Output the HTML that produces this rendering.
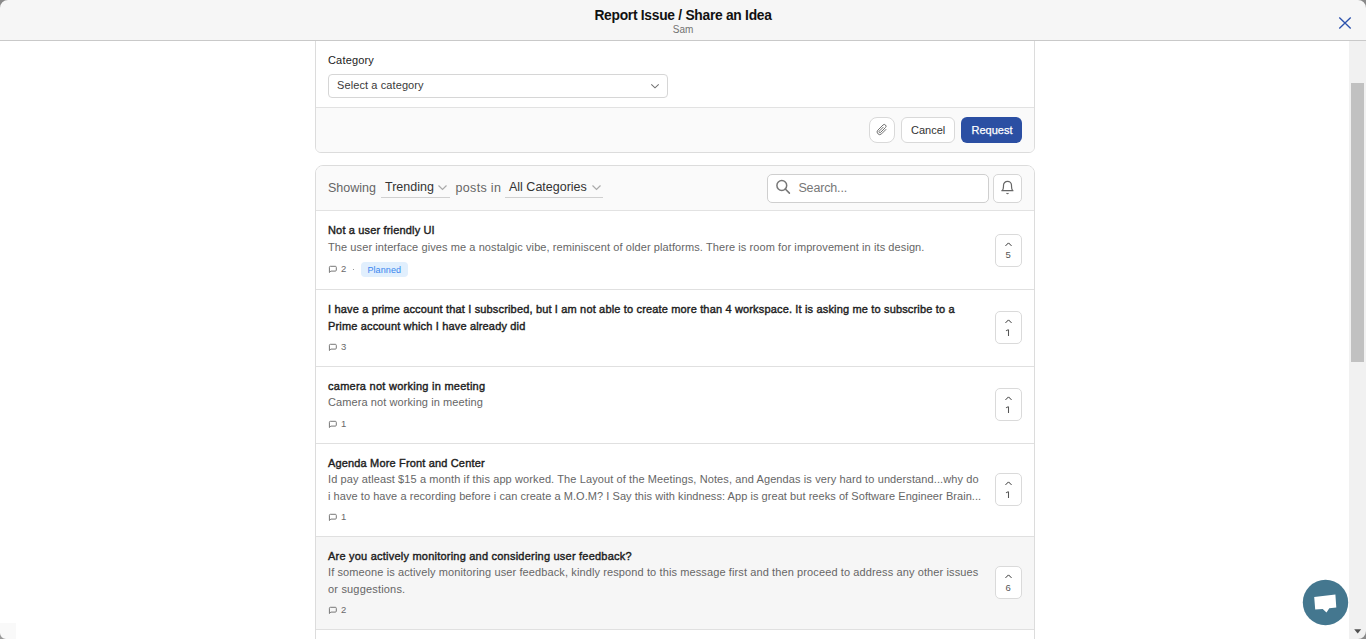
<!DOCTYPE html>
<html><head><meta charset="utf-8">
<style>
*{box-sizing:border-box;margin:0;padding:0}
html,body{width:1366px;height:639px;overflow:hidden;background:#fff;font-family:"Liberation Sans", sans-serif;color:#222}
#hdr{position:absolute;left:0;top:0;width:1366px;height:41px;background:#f6f6f6;border-bottom:1px solid #c9c9c9;z-index:5}
#sb{position:absolute;left:1349px;top:41px;width:17px;height:598px;background:#f1f1f1;z-index:4}
#thumb{position:absolute;left:1351px;top:83px;width:13px;height:279px;background:#c1c1c1;z-index:4}
</style></head><body>
<div style="position:absolute;left:315px;top:-20px;width:720px;height:173px;border:1px solid #dcdcdc;border-radius:6px;background:#fff;overflow:hidden"><div style="position:absolute;left:0;top:126px;width:718px;height:46px;background:#fafafa;border-top:1px solid #e2e2e2"></div></div>
<div style="position:absolute;left:328px;top:55px;font-size:11px;line-height:11px;color:#222;font-weight:400;letter-spacing:0.17px;white-space:nowrap;">Category</div>
<div style="position:absolute;left:328px;top:74px;width:340px;height:24px;border:1px solid #d6d6d6;border-radius:4px;background:#fff"></div>
<div style="position:absolute;left:337px;top:80px;font-size:11px;line-height:11px;color:#3a3a3a;font-weight:400;letter-spacing:0.1px;white-space:nowrap;">Select a category</div>
<svg style="position:absolute;left:650px;top:83px" width="10" height="6" viewBox="0 0 10 6"><path d="M1.3 1.3L5 4.8L8.7 1.3" fill="none" stroke="#707070" stroke-width="1.05"/></svg>
<div style="position:absolute;left:869px;top:117px;width:26px;height:26px;border:1px solid #d9d9d9;border-radius:8px;background:#fff"></div>
<svg style="position:absolute;left:874px;top:122px" width="16" height="16" viewBox="0 0 16 16"><path d="M12.2 7.2L7.6 11.8a2.6 2.6 0 0 1-3.7-3.7l5.1-5.1a1.7 1.7 0 0 1 2.5 2.5L6.6 10.4a0.9 0.9 0 0 1-1.3-1.3L9.4 5" fill="none" stroke="#6a6a6a" stroke-width="0.95"/></svg>
<div style="position:absolute;left:901px;top:117px;width:54px;height:26px;border:1px solid #d9d9d9;border-radius:6px;background:#fff"></div>
<div style="position:absolute;left:911px;top:125px;font-size:11px;line-height:11px;color:#333;font-weight:400;letter-spacing:0px;white-space:nowrap;">Cancel</div>
<div style="position:absolute;left:961px;top:117px;width:61px;height:26px;border-radius:6px;background:#2b4fa3"></div>
<div style="position:absolute;left:971.5px;top:125px;font-size:11px;line-height:11px;color:#fff;font-weight:400;letter-spacing:0px;white-space:nowrap;-webkit-text-stroke:0.25px #fff">Request</div>
<div style="position:absolute;left:315px;top:165px;width:720px;height:520px;border:1px solid #dcdcdc;border-radius:8px;background:#fff;overflow:hidden"><div style="position:absolute;left:0;top:0;width:718px;height:45px;background:#fafafa;border-bottom:1px solid #e2e2e2"></div></div>
<div style="position:absolute;left:328px;top:182px;font-size:12.5px;line-height:12.5px;color:#666;font-weight:400;letter-spacing:0px;white-space:nowrap;">Showing</div>
<div style="position:absolute;left:385px;top:181px;font-size:12.5px;line-height:12.5px;color:#333;font-weight:400;letter-spacing:0px;white-space:nowrap;">Trending</div>
<svg style="position:absolute;left:437px;top:184px" width="11" height="7" viewBox="0 0 11 7"><path d="M1.5 1.5L5.5 5.5L9.5 1.5" fill="none" stroke="#aaa" stroke-width="1.2"/></svg>
<div style="position:absolute;left:381px;top:197px;width:69px;height:1px;background:#d0d0d0"></div>
<div style="position:absolute;left:455.5px;top:182px;font-size:12.5px;line-height:12.5px;color:#666;font-weight:400;letter-spacing:0.33px;white-space:nowrap;">posts in</div>
<div style="position:absolute;left:509px;top:181px;font-size:12.5px;line-height:12.5px;color:#333;font-weight:400;letter-spacing:0px;white-space:nowrap;">All Categories</div>
<svg style="position:absolute;left:591px;top:184px" width="11" height="7" viewBox="0 0 11 7"><path d="M1.5 1.5L5.5 5.5L9.5 1.5" fill="none" stroke="#aaa" stroke-width="1.2"/></svg>
<div style="position:absolute;left:505px;top:197px;width:98px;height:1px;background:#d0d0d0"></div>
<div style="position:absolute;left:767px;top:174px;width:222px;height:29px;border:1px solid #cfcfcf;border-radius:5px;background:#fff"></div>
<svg style="position:absolute;left:774px;top:179px" width="18" height="18" viewBox="0 0 18 18"><circle cx="7.8" cy="6.5" r="4.9" fill="none" stroke="#777" stroke-width="1.5"/><path d="M11.3 10L15.4 14.1" stroke="#777" stroke-width="1.6" stroke-linecap="round"/></svg>
<div style="position:absolute;left:798.4px;top:182px;font-size:12.5px;line-height:12.5px;color:#777;font-weight:400;letter-spacing:-0.15px;white-space:nowrap;">Search...</div>
<div style="position:absolute;left:993px;top:174px;width:29px;height:29px;border:1px solid #d6d6d6;border-radius:5px;background:#fff"></div>
<svg style="position:absolute;left:999px;top:179px" width="17" height="17" viewBox="0 0 17 17"><path d="M2.4 11.7H14.4M3.3 11.7C4.2 10.4 4.5 9.2 4.5 7.3V6.3A4 4 0 0 1 12.5 6.3V7.3C12.5 9.2 12.8 10.4 13.7 11.7" fill="none" stroke="#666" stroke-width="1.2"/><path d="M7.5 14.2Q8.5 15.4 9.5 14.2" fill="none" stroke="#666" stroke-width="1.1"/></svg>
<div style="position:absolute;left:316px;top:289px;width:718px;height:1px;background:#e0e0e0"></div>
<div style="position:absolute;left:328px;top:225px;font-size:11px;line-height:11px;color:#1d1d1d;font-weight:400;letter-spacing:0.16px;white-space:nowrap;-webkit-text-stroke:0.4px #1d1d1d">Not a user friendly UI</div>
<div style="position:absolute;left:328px;top:242px;font-size:11px;line-height:11px;color:#666;font-weight:400;letter-spacing:0.09px;white-space:nowrap;">The user interface gives me a nostalgic vibe, reminiscent of older platforms. There is room for improvement in its design.</div>
<svg style="position:absolute;left:328px;top:265px" width="10" height="9" viewBox="0 0 10 9"><path d="M1.4 7.5V2.3a1 1 0 0 1 1-1h4.9a1 1 0 0 1 1 1v2.8a1 1 0 0 1-1 1H2.9z" fill="none" stroke="#777" stroke-width="1"/></svg>
<div style="position:absolute;left:341px;top:264px;font-size:9.5px;line-height:9.5px;color:#6a6a6a;font-weight:400;letter-spacing:0px;white-space:nowrap;">2</div>
<div style="position:absolute;left:353px;top:269px;width:1px;height:1px;background:#999"></div>
<div style="position:absolute;left:361px;top:262px;width:47px;height:15px;border-radius:4px;background:#e1effd"></div>
<div style="position:absolute;left:367.4px;top:266px;font-size:9px;line-height:9px;color:#3886ef;font-weight:400;letter-spacing:0.1px;white-space:nowrap;">Planned</div>
<div style="position:absolute;left:995px;top:234px;width:27px;height:33px;border:1px solid #dadada;border-radius:5px;background:#fff"></div><svg style="position:absolute;left:1004px;top:242px" width="9" height="6" viewBox="0 0 9 6"><path d="M1.5 3.9L4.5 0.9L7.5 3.9" fill="none" stroke="#333" stroke-width="1"/></svg><div style="position:absolute;left:1005.5px;top:250px;font-size:9.5px;line-height:9.5px;color:#555;font-weight:400;letter-spacing:0px;white-space:nowrap;">5</div>
<div style="position:absolute;left:316px;top:366px;width:718px;height:1px;background:#e0e0e0"></div>
<div style="position:absolute;left:328px;top:304px;font-size:11px;line-height:11px;color:#1d1d1d;font-weight:400;letter-spacing:0.16px;white-space:nowrap;-webkit-text-stroke:0.4px #1d1d1d">I have a prime account that I subscribed, but I am not able to create more than 4 workspace. It is asking me to subscribe to a</div>
<div style="position:absolute;left:328px;top:321px;font-size:11px;line-height:11px;color:#1d1d1d;font-weight:400;letter-spacing:0.16px;white-space:nowrap;-webkit-text-stroke:0.4px #1d1d1d">Prime account which I have already did</div>
<svg style="position:absolute;left:328px;top:343px" width="10" height="9" viewBox="0 0 10 9"><path d="M1.4 7.5V2.3a1 1 0 0 1 1-1h4.9a1 1 0 0 1 1 1v2.8a1 1 0 0 1-1 1H2.9z" fill="none" stroke="#777" stroke-width="1"/></svg>
<div style="position:absolute;left:341px;top:342px;font-size:9.5px;line-height:9.5px;color:#6a6a6a;font-weight:400;letter-spacing:0px;white-space:nowrap;">3</div>
<div style="position:absolute;left:995px;top:311px;width:27px;height:33px;border:1px solid #dadada;border-radius:5px;background:#fff"></div><svg style="position:absolute;left:1004px;top:319px" width="9" height="6" viewBox="0 0 9 6"><path d="M1.5 3.9L4.5 0.9L7.5 3.9" fill="none" stroke="#333" stroke-width="1"/></svg><svg style="position:absolute;left:1004px;top:327px" width="8" height="10" viewBox="0 0 8 10"><path d="M2 3.9L4.3 2.6M4.5 2.4V9" fill="none" stroke="#555" stroke-width="1.05"/></svg>
<div style="position:absolute;left:316px;top:443px;width:718px;height:1px;background:#e0e0e0"></div>
<div style="position:absolute;left:328px;top:381px;font-size:11px;line-height:11px;color:#1d1d1d;font-weight:400;letter-spacing:0.26px;white-space:nowrap;-webkit-text-stroke:0.4px #1d1d1d">camera not working in meeting</div>
<div style="position:absolute;left:328px;top:397px;font-size:11px;line-height:11px;color:#666;font-weight:400;letter-spacing:0.09px;white-space:nowrap;">Camera not working in meeting</div>
<svg style="position:absolute;left:328px;top:420px" width="10" height="9" viewBox="0 0 10 9"><path d="M1.4 7.5V2.3a1 1 0 0 1 1-1h4.9a1 1 0 0 1 1 1v2.8a1 1 0 0 1-1 1H2.9z" fill="none" stroke="#777" stroke-width="1"/></svg>
<div style="position:absolute;left:341px;top:419px;font-size:9.5px;line-height:9.5px;color:#6a6a6a;font-weight:400;letter-spacing:0px;white-space:nowrap;">1</div>
<div style="position:absolute;left:995px;top:388px;width:27px;height:33px;border:1px solid #dadada;border-radius:5px;background:#fff"></div><svg style="position:absolute;left:1004px;top:396px" width="9" height="6" viewBox="0 0 9 6"><path d="M1.5 3.9L4.5 0.9L7.5 3.9" fill="none" stroke="#333" stroke-width="1"/></svg><svg style="position:absolute;left:1004px;top:404px" width="8" height="10" viewBox="0 0 8 10"><path d="M2 3.9L4.3 2.6M4.5 2.4V9" fill="none" stroke="#555" stroke-width="1.05"/></svg>
<div style="position:absolute;left:316px;top:536px;width:718px;height:1px;background:#e0e0e0"></div>
<div style="position:absolute;left:328px;top:458px;font-size:11px;line-height:11px;color:#1d1d1d;font-weight:400;letter-spacing:0.16px;white-space:nowrap;-webkit-text-stroke:0.4px #1d1d1d">Agenda More Front and Center</div>
<div style="position:absolute;left:328px;top:474px;font-size:11px;line-height:11px;color:#666;font-weight:400;letter-spacing:0.107px;white-space:nowrap;">Id pay atleast $15 a month if this app worked. The Layout of the Meetings, Notes, and Agendas is very hard to understand...why do</div>
<div style="position:absolute;left:328px;top:491px;font-size:11px;line-height:11px;color:#666;font-weight:400;letter-spacing:0.055999999999999994px;white-space:nowrap;">i have to have a recording before i can create a M.O.M? I Say this with kindness: App is great but reeks of Software Engineer Brain...</div>
<svg style="position:absolute;left:328px;top:513px" width="10" height="9" viewBox="0 0 10 9"><path d="M1.4 7.5V2.3a1 1 0 0 1 1-1h4.9a1 1 0 0 1 1 1v2.8a1 1 0 0 1-1 1H2.9z" fill="none" stroke="#777" stroke-width="1"/></svg>
<div style="position:absolute;left:341px;top:512px;font-size:9.5px;line-height:9.5px;color:#6a6a6a;font-weight:400;letter-spacing:0px;white-space:nowrap;">1</div>
<div style="position:absolute;left:995px;top:473px;width:27px;height:33px;border:1px solid #dadada;border-radius:5px;background:#fff"></div><svg style="position:absolute;left:1004px;top:481px" width="9" height="6" viewBox="0 0 9 6"><path d="M1.5 3.9L4.5 0.9L7.5 3.9" fill="none" stroke="#333" stroke-width="1"/></svg><svg style="position:absolute;left:1004px;top:489px" width="8" height="10" viewBox="0 0 8 10"><path d="M2 3.9L4.3 2.6M4.5 2.4V9" fill="none" stroke="#555" stroke-width="1.05"/></svg>
<div style="position:absolute;left:316px;top:537px;width:718px;height:92px;background:#f6f6f6"></div>
<div style="position:absolute;left:316px;top:629px;width:718px;height:1px;background:#e0e0e0"></div>
<div style="position:absolute;left:328px;top:551px;font-size:11px;line-height:11px;color:#1d1d1d;font-weight:400;letter-spacing:0.22px;white-space:nowrap;-webkit-text-stroke:0.4px #1d1d1d">Are you actively monitoring and considering user feedback?</div>
<div style="position:absolute;left:328px;top:567px;font-size:11px;line-height:11px;color:#666;font-weight:400;letter-spacing:0.111px;white-space:nowrap;">If someone is actively monitoring user feedback, kindly respond to this message first and then proceed to address any other issues</div>
<div style="position:absolute;left:328px;top:584px;font-size:11px;line-height:11px;color:#666;font-weight:400;letter-spacing:0.18px;white-space:nowrap;">or suggestions.</div>
<svg style="position:absolute;left:328px;top:606px" width="10" height="9" viewBox="0 0 10 9"><path d="M1.4 7.5V2.3a1 1 0 0 1 1-1h4.9a1 1 0 0 1 1 1v2.8a1 1 0 0 1-1 1H2.9z" fill="none" stroke="#777" stroke-width="1"/></svg>
<div style="position:absolute;left:341px;top:605px;font-size:9.5px;line-height:9.5px;color:#6a6a6a;font-weight:400;letter-spacing:0px;white-space:nowrap;">2</div>
<div style="position:absolute;left:995px;top:566px;width:27px;height:33px;border:1px solid #dadada;border-radius:5px;background:#fff"></div><svg style="position:absolute;left:1004px;top:574px" width="9" height="6" viewBox="0 0 9 6"><path d="M1.5 3.9L4.5 0.9L7.5 3.9" fill="none" stroke="#333" stroke-width="1"/></svg><div style="position:absolute;left:1005.5px;top:583px;font-size:9.5px;line-height:9.5px;color:#555;font-weight:400;letter-spacing:0px;white-space:nowrap;">6</div>
<div id="hdr">
<div style="position:absolute;left:0px;top:9px;font-size:13.8px;line-height:13.8px;color:#111;font-weight:700;letter-spacing:-0.27px;white-space:nowrap;width:1366px;text-align:center">Report Issue / Share an Idea</div>
<div style="position:absolute;left:0px;top:25px;font-size:10px;line-height:10px;color:#737373;font-weight:400;letter-spacing:0px;white-space:nowrap;width:1366px;text-align:center">Sam</div>
<svg style="position:absolute;left:1337px;top:15px" width="16" height="16" viewBox="0 0 16 16"><path d="M2.3 2.4L13.7 13.6M13.7 2.4L2.3 13.6" stroke="#2c52ad" stroke-width="1.35"/></svg>
</div>
<div style="position:absolute;left:0;top:623px;width:16px;height:16px;background:#f9f9f9"></div>
<div id="sb"></div><div id="thumb"></div>
<svg style="position:absolute;left:1354px;top:629px;z-index:6" width="8" height="5" viewBox="0 0 8 5"><path d="M0.2 0.2H7.2L3.7 4.4z" fill="#505050"/></svg>
<svg style="position:absolute;left:1302px;top:579px;z-index:6" width="47" height="47" viewBox="0 0 47 47">
<circle cx="23.5" cy="23.5" r="22.7" fill="#44778f"/>
<path d="M12.2 18L33.4 15.6L34.3 28.6L27.3 29.3L24.5 33.6L20.7 29.9L13.2 30.6z" fill="#fff"/>
</svg>
<svg style="position:absolute;left:0;top:0;z-index:9" width="1366" height="639" viewBox="0 0 1366 639">
<path d="M0 0H8A8 8 0 0 0 0 8z" fill="#8a8a8a"/>
<path d="M1366 0H1358A8 8 0 0 1 1366 8z" fill="#8a8a8a"/>
<path d="M0 639H6A6 6 0 0 1 0 633z" fill="#9a9a9a"/>
<path d="M1366 639H1358A8 8 0 0 0 1366 631z" fill="#8a8a8a"/>
</svg>
</body></html>
